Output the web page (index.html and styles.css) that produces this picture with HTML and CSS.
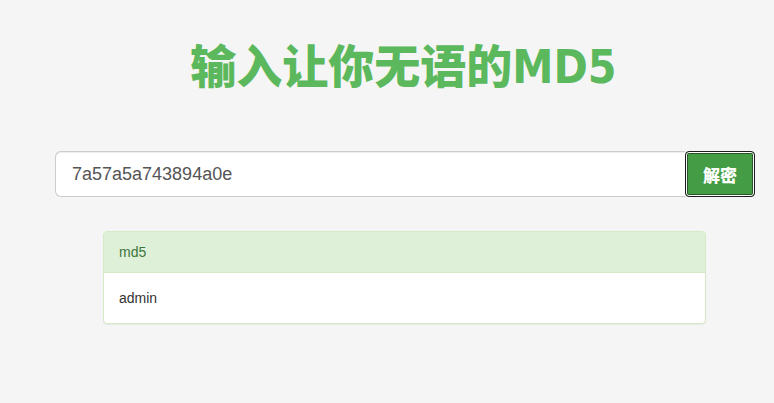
FILE: index.html
```html
<!DOCTYPE html>
<html lang="zh">
<head>
<meta charset="utf-8">
<title>MD5</title>
<link rel="stylesheet" href="styles.css">
</head>
<body>
<div class="page">
  <h1 class="title">输入让你无语的<span class="latin">MD5</span></h1>
  <form class="search">
    <input class="field" type="text" value="7a57a5a743894a0e">
    <button class="btn" type="button">解密</button>
  </form>
  <div class="panel">
    <div class="panel-heading">md5</div>
    <div class="panel-body">admin</div>
  </div>
</div>
</body>
</html>
```
FILE: styles.css
```css
html, body {
  margin: 0;
  padding: 0;
  background: #f5f5f5;
}
body {
  font-family: "Liberation Sans", Arial, "Noto Sans CJK SC", sans-serif;
  font-size: 14px;
  color: #333;
}
.page {
  width: 774px;
  height: 403px;
  box-sizing: border-box;
  padding-top: 35px;
}
.title {
  margin: 0;
  padding-left: 33px;
  height: 56px;
  text-align: center;
  font-family: "Noto Sans CJK SC", sans-serif;
  font-weight: 900;
  font-size: 46px;
  line-height: 56px;
  color: #5cb85c;
}
.latin {
  font-family: "DejaVu Sans Condensed", "DejaVu Sans", sans-serif;
  font-stretch: condensed;
  font-weight: 700;
  line-height: 1;
}
.search {
  display: flex;
  margin: 60px 19px 0 55px;
  height: 46px;
}
.field {
  flex: 1;
  box-sizing: border-box;
  height: 46px;
  margin: 0;
  padding: 0 16px;
  border: 1px solid #ccc;
  border-radius: 6px 0 0 6px;
  border-right: none;
  background: #fff;
  font-family: "Liberation Sans", Arial, sans-serif;
  font-size: 18px;
  color: #555;
  outline: none;
  box-shadow: inset 0 1px 1px rgba(0,0,0,.075);
}
.btn {
  width: 70px;
  height: 46px;
  box-sizing: border-box;
  margin: 0;
  padding: 0;
  border: 1px solid #1c1c1c;
  border-radius: 4px;
  background: #449d44;
  box-shadow: inset 0 0 0 1px #fff, inset 0 0 0 2px #255625;
  color: #fff;
  font-family: "Noto Sans CJK SC", sans-serif;
  font-weight: 900;
  font-size: 17px;
  cursor: pointer;
}
.panel {
  margin: 34px 68px 0 103px;
  background: #fff;
  border: 1px solid #d6e9c6;
  border-radius: 4px;
  box-shadow: 0 1px 1px rgba(0,0,0,.05);
  overflow: hidden;
}
.panel-heading {
  padding: 10px 15px;
  line-height: 20px;
  background: #dff0d8;
  color: #3c763d;
  border-bottom: 1px solid #d6e9c6;
}
.panel-body {
  padding: 15px;
  line-height: 20px;
  color: #333;
}
```
